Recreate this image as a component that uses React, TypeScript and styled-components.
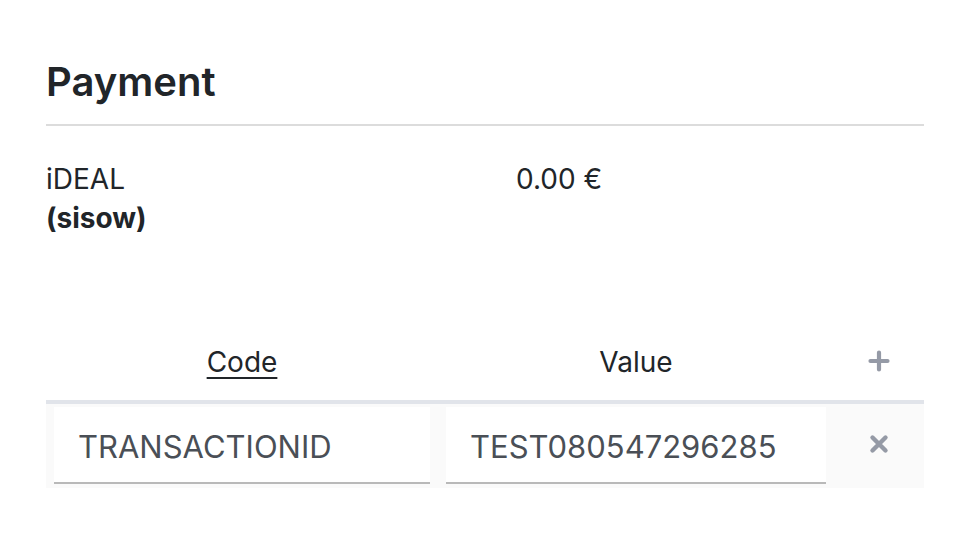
import styled, { createGlobalStyle } from 'styled-components'

const GlobalStyle = createGlobalStyle`
  body {
    margin: 0;
    background: #ffffff;
    font-family: Inter, "Noto Sans", "Liberation Sans", sans-serif;
    color: #212529;
  }
`

const Page = styled.div`
  padding: 58px 48px 0 46px;
`

const Title = styled.h3`
  margin: 0;
  padding-bottom: 18px;
  font-size: 40px;
  line-height: 48px;
  font-weight: 600;
  border-bottom: 2px solid #dcdcdc;
`

const Info = styled.div`
  display: grid;
  grid-template-columns: 470px 1fr;
  margin-top: 34px;
  font-size: 28px;
  line-height: 39px;
`

const Bold = styled.div`
  font-weight: 700;
`

const Table = styled.table`
  width: 100%;
  margin-top: 86px;
  border-collapse: collapse;
  table-layout: fixed;
`

const Th = styled.th`
  padding: 20px 8px 20px;
  font-size: 28px;
  line-height: 36px;
  font-weight: 400;
  text-align: center;
  border-bottom: 4px solid #e1e4ea;
`

const SortLink = styled.span`
  text-decoration: underline;
  text-underline-offset: 5px;
  text-decoration-thickness: 2px;
`

const Row = styled.tr`
  background: #fafafa;
`

const Td = styled.td`
  padding: 3px 8px 4px;
  text-align: center;
  vertical-align: middle;
`

const Field = styled.input`
  display: block;
  box-sizing: border-box;
  width: 100%;
  height: 77px;
  padding: 3px 24px 0;
  border: none;
  border-bottom: 2px solid #b9b9b9;
  background: #ffffff;
  font-family: inherit;
  font-size: 31px;
  color: #4a4f56;
  outline: none;
`

const IconButton = styled.button`
  display: inline-flex;
  align-items: center;
  justify-content: center;
  padding: 0;
  border: none;
  background: none;
  color: #959aa6;
  cursor: pointer;
`

function PlusIcon() {
  return (
    <svg width="22" height="22" viewBox="0 0 22 22">
      <path d="M11 2.5v17M2.5 11h17" stroke="currentColor" strokeWidth="4.2" strokeLinecap="round" />
    </svg>
  )
}

function CloseIcon() {
  return (
    <svg width="20" height="20" viewBox="0 0 20 20">
      <path d="M3.5 3.5l13 13M16.5 3.5l-13 13" stroke="currentColor" strokeWidth="4.4" strokeLinecap="round" />
    </svg>
  )
}

export default function App() {
  return (
    <Page>
      <GlobalStyle />
      <Title>Payment</Title>
      <Info>
        <div>
          <div>iDEAL</div>
          <Bold>(sisow)</Bold>
        </div>
        <div>0.00 €</div>
      </Info>
      <Table>
        <colgroup>
          <col style={{ width: 392 }} />
          <col style={{ width: 396 }} />
          <col style={{ width: 90 }} />
        </colgroup>
        <thead>
          <tr>
            <Th>
              <SortLink>Code</SortLink>
            </Th>
            <Th>Value</Th>
            <Th>
              <IconButton aria-label="Add">
                <PlusIcon />
              </IconButton>
            </Th>
          </tr>
        </thead>
        <tbody>
          <Row>
            <Td>
              <Field defaultValue="TRANSACTIONID" />
            </Td>
            <Td>
              <Field defaultValue="TEST080547296285" />
            </Td>
            <Td>
              <IconButton aria-label="Remove">
                <CloseIcon />
              </IconButton>
            </Td>
          </Row>
        </tbody>
      </Table>
    </Page>
  )
}
